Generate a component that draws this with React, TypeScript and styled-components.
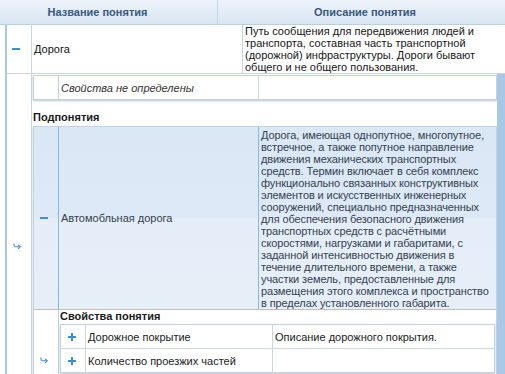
import styled, { createGlobalStyle } from "styled-components"

const GlobalStyle = createGlobalStyle`
    html, body {
        margin: 0;
        padding: 0;
        background: #ffffff;
    }
    body {
        font-family: "Liberation Sans", Arial, sans-serif;
        font-size: 11px;
        color: #1b1b1b;
        overflow: hidden;
    }
`

const roadDescription =
    "Путь сообщения для передвижения людей и транспорта, составная часть транспортной (дорожной) инфраструктуры. Дороги бывают общего и не общего пользования."

const carRoadDescription =
    "Дорога, имеющая однопутное, многопутное, встречное, а также попутное направление движения механических транспортных средств. Термин включает в себя комплекс функционально связанных конструктивных элементов и искусственных инженерных сооружений, специально предназначенных для обеспечения безопасного движения транспортных средств с расчётными скоростями, нагрузками и габаритами, с заданной интенсивностью движения в течение длительного времени, а также участки земель, предоставленные для размещения этого комплекса и пространство в пределах установленного габарита."

const properties = [
    { name: "Дорожное покрытие", description: "Описание дорожного покрытия." },
    { name: "Количество проезжих частей", description: "" },
]

const Minus = () => (
    <svg width="8" height="2" viewBox="0 0 8 2">
        <rect width="8" height="2" fill="#3b8ed7" />
    </svg>
)

const Plus = () => (
    <svg width="8" height="8" viewBox="0 0 8 8">
        <rect x="0" y="3" width="8" height="2" fill="#3b8ed7" />
        <rect x="3" y="0" width="2" height="8" fill="#3b8ed7" />
    </svg>
)

const DrillArrow = () => (
    <svg width="8" height="6" viewBox="0 0 8 6" fill="none" stroke="#3b8ed7" strokeWidth="1.1">
        <path d="M1.2 0.5 C0.4 2.6 1.4 3.8 3 3.8 H7.2" />
        <path d="M5.2 1.8 L7.2 3.8 L5.2 5.8" />
    </svg>
)

const App = () => {
    return (
        <>
            <GlobalStyle />
            <Grid>
                <HeaderRow>
                    <HeaderCell $shift="0 22px 0 0" $divider>Название понятия</HeaderCell>
                    <HeaderCell $shift="0 0 0 7px">Описание понятия</HeaderCell>
                </HeaderRow>
                <Body>
                    <MasterRow>
                        <HierCell $pad={5}>
                            <Minus />
                        </HierCell>
                        <NameCell>Дорога</NameCell>
                        <DescCell>{roadDescription}</DescCell>
                    </MasterRow>
                    <OuterDetailRow>
                        <HierCell $pad={6}>
                            <DrillArrow />
                        </HierCell>
                        <OuterDetail>
                            <SubTable>
                                <SubRow>
                                    <SubHier />
                                    <SubCell $italic>Свойства не определены</SubCell>
                                    <SubCell $last />
                                </SubRow>
                            </SubTable>
                            <SectionTitle $top={11}>Подпонятия</SectionTitle>
                            <SubTable>
                                <SelectedRow>
                                    <SubHier $selected>
                                        <Minus />
                                    </SubHier>
                                    <SubCell $selected>Автомобльная дорога</SubCell>
                                    <SelectedDesc>{carRoadDescription}</SelectedDesc>
                                </SelectedRow>
                                <InnerDetailRow>
                                    <SubHier>
                                        <DrillArrow />
                                    </SubHier>
                                    <InnerDetail>
                                        <SectionTitle $top={0} $height={12}>Свойства понятия</SectionTitle>
                                        <PropTable>
                                            {properties.map((p) => (
                                                <PropRow key={p.name}>
                                                    <PropToggle>
                                                        <Plus />
                                                    </PropToggle>
                                                    <SubCell>{p.name}</SubCell>
                                                    <SubCell $last>{p.description}</SubCell>
                                                </PropRow>
                                            ))}
                                        </PropTable>
                                    </InnerDetail>
                                </InnerDetailRow>
                            </SubTable>
                        </OuterDetail>
                        <Band />
                    </OuterDetailRow>
                </Body>
            </Grid>
        </>
    )
}

export default App

const Grid = styled.div`
    width: 505px;
    height: 374px;
    overflow: hidden;
    background: #ffffff;
`

const HeaderRow = styled.div`
    display: grid;
    grid-template-columns: 218px 1fr;
    height: 24px;
    border-bottom: 1px solid #b7cfe5;
    background: linear-gradient(#edf3fa, #d9e6f3);
`

const HeaderCell = styled.div<{ $shift: string; $divider?: boolean }>`
    display: flex;
    align-items: center;
    justify-content: center;
    padding: ${(p) => p.$shift};
    font-weight: 700;
    font-size: 11px;
    color: #36597c;
    border-right: ${(p) => (p.$divider ? "1px solid #c3d6e9" : "none")};
`

const Body = styled.div`
    margin-left: 5px;
    border-left: 2px solid #a8c9e6;
`

const MasterRow = styled.div`
    display: grid;
    grid-template-columns: 25px 211px 1fr;
    border-bottom: 1px solid #c9d5e1;
`

const HierCell = styled.div<{ $pad: number }>`
    display: flex;
    align-items: center;
    padding-left: ${(p) => p.$pad}px;
    border-right: 1px solid #c9d5e1;
`

const NameCell = styled.div`
    display: flex;
    align-items: center;
    padding-left: 2px;
    border-right: 1px solid #c9d5e1;
    color: #111111;
`

const DescCell = styled.div`
    padding: 0 6px 0 2px;
    line-height: 12px;
    min-height: 47px;
    color: #161616;
`

const OuterDetailRow = styled.div`
    display: grid;
    grid-template-columns: 25px 1fr 8px;
`

const OuterDetail = styled.div`
    padding: 1px 0 6px 1px;
`

const Band = styled.div`
    background: #a8c9e6;
`

const SubTable = styled.div`
    border: 1px solid #c3d2e1;
    box-shadow: 0 1px 2px rgba(60, 80, 100, 0.35);
    background: #ffffff;
`

const SubRow = styled.div`
    display: grid;
    grid-template-columns: 25px 200px 1fr;
    height: 23px;
`

const SubHier = styled.div<{ $selected?: boolean }>`
    display: flex;
    align-items: center;
    padding-left: 6px;
    border-right: 1px solid ${(p) => (p.$selected ? "#86b8e4" : "#b9d2ea")};
`

const SubCell = styled.div<{ $italic?: boolean; $last?: boolean; $selected?: boolean }>`
    display: flex;
    align-items: center;
    padding-left: 2px;
    font-style: ${(p) => (p.$italic ? "italic" : "normal")};
    color: ${(p) => (p.$italic ? "#333333" : p.$selected ? "#34404c" : "#1b1b1b")};
    border-right: ${(p) => (p.$last ? "none" : p.$selected ? "1px solid #86b8e4" : "1px solid #c9d5e1")};
`

const SectionTitle = styled.div<{ $top: number; $height?: number }>`
    margin-top: ${(p) => p.$top}px;
    margin-bottom: 2px;
    font-weight: 700;
    line-height: ${(p) => p.$height ?? 13}px;
    color: #1a1a1a;
`

const SelectedRow = styled.div`
    display: grid;
    grid-template-columns: 25px 200px 1fr;
    background: linear-gradient(#dae7f5 0%, #dde9f6 50%, #e5eef8 50%, #e6eff8 100%);
    border-bottom: 1px solid #9fc5e8;
`

const SelectedDesc = styled.div`
    padding: 2px 0 0 2px;
    line-height: 12px;
    letter-spacing: -0.1px;
    color: #34414e;
`

const InnerDetailRow = styled.div`
    display: grid;
    grid-template-columns: 25px 1fr;
    min-height: 100px;
`

const InnerDetail = styled.div`
    padding: 0 1px 0 1px;
`

const PropTable = styled.div`
    border: 1px solid #c3d2e1;
    box-shadow: 0 1px 2px rgba(60, 80, 100, 0.35);
`

const PropRow = styled.div`
    display: grid;
    grid-template-columns: 25px 187px 1fr;
    height: 23px;
    & + & {
        border-top: 1px solid #c9d5e1;
    }
`

const PropToggle = styled.div`
    display: flex;
    align-items: center;
    padding-left: 7px;
    border-right: 1px solid #c9d5e1;
`
